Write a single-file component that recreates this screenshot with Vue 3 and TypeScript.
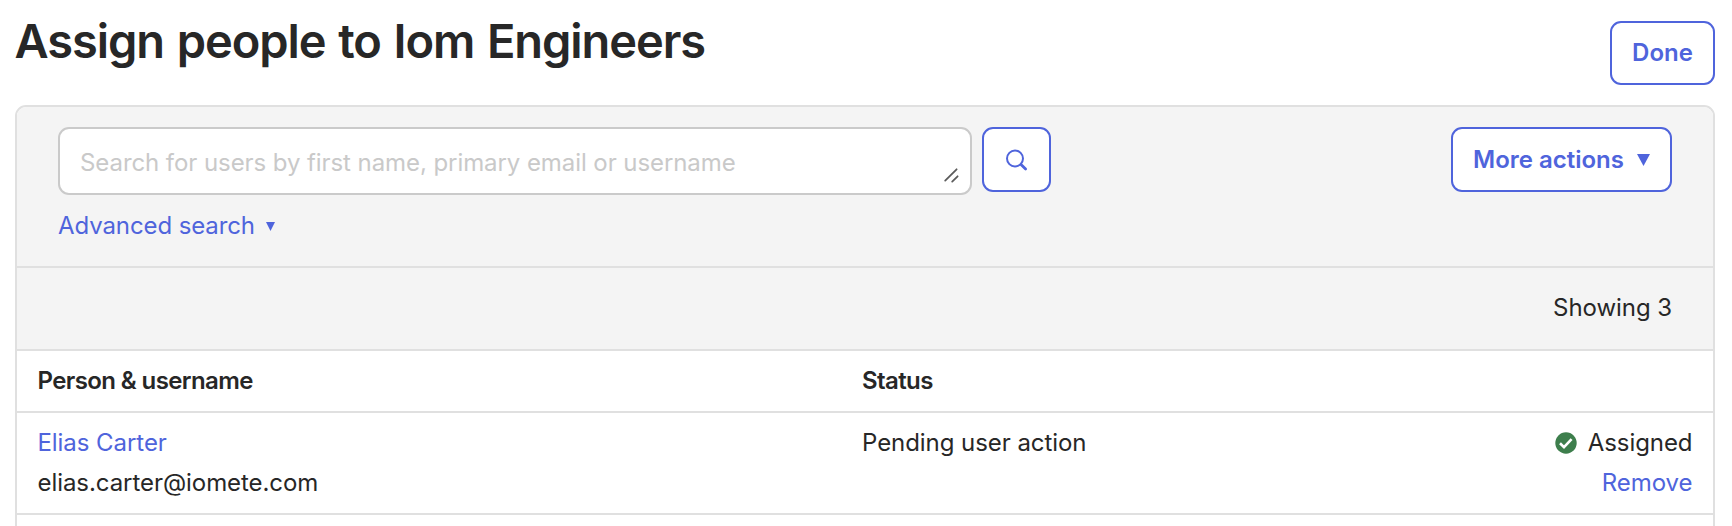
<script setup lang="ts">
import { ref } from 'vue'

interface Person {
  name: string
  email: string
  status: string
}

const query = ref('')
const people: Person[] = [
  { name: 'Elias Carter', email: 'elias.carter@iomete.com', status: 'Pending user action' },
]
</script>

<template>
  <main class="page">
    <header class="page-head">
      <h1 class="title">Assign people to Iom Engineers</h1>
      <button class="btn done" type="button">Done</button>
    </header>

    <section class="panel">
      <div class="filters">
        <div class="search-col">
          <div class="search-row">
            <label class="search-box">
              <input v-model="query" class="search-input" type="text" placeholder="Search for users by first name, primary email or username" />
              <svg class="grip" viewBox="0 0 16 16" width="16" height="16">
                <path d="M2.2 13.6 13.6 2.3M9.2 14.6 14.6 9.3" />
              </svg>
            </label>
            <button class="btn search-btn" type="button" aria-label="Search">
              <svg viewBox="0 0 22 22" width="22" height="22">
                <circle cx="9" cy="9.5" r="8" />
                <path d="M15 15.4 19.6 20" class="handle" />
              </svg>
            </button>
          </div>
          <a class="advanced">
            <span>Advanced search</span>
            <svg viewBox="0 0 9 9" width="9" height="9"><path d="M0 0H9L4.5 9Z" /></svg>
          </a>
        </div>
        <button class="btn more" type="button">
          <span>More actions</span>
          <svg viewBox="0 0 13 12" width="13" height="12"><path d="M0 0H13L6.5 12Z" /></svg>
        </button>
      </div>

      <div class="count">Showing 3</div>

      <div class="row head">
        <div class="cell">Person &amp; username</div>
        <div class="cell">Status</div>
        <div class="cell"></div>
      </div>
      <div v-for="p in people" :key="p.email" class="row">
        <div class="cell">
          <a class="link">{{ p.name }}</a>
          <span>{{ p.email }}</span>
        </div>
        <div class="cell">{{ p.status }}</div>
        <div class="cell end">
          <span class="assigned">
            <svg viewBox="0 0 22 22" width="22" height="22">
              <circle cx="11" cy="11" r="10.7" />
              <path d="M5 11.2 9 15.1 16.6 7.2" />
            </svg>
            <span>Assigned</span>
          </span>
          <a class="link">Remove</a>
        </div>
      </div>
    </section>
  </main>
</template>

<style>
html,
body {
  margin: 0;
  height: 526px;
  overflow: hidden;
  background: #fff;
}
</style>

<style scoped>
.page {
  box-sizing: border-box;
  height: 526px;
  padding: 21px 17px 0 15px;
  overflow: hidden;
  color: #272727;
  font: 24px/40px Inter, 'Liberation Sans', sans-serif;
  letter-spacing: -0.06px;
}
.page-head {
  display: flex;
  justify-content: space-between;
  align-items: flex-start;
  height: 84px;
}
.title {
  margin: -10px 0 0 -0.5px;
  font-size: 47px;
  line-height: 60px;
  font-weight: 600;
  letter-spacing: -1.08px;
  word-spacing: 2px;
  white-space: nowrap;
}
.btn {
  display: flex;
  align-items: center;
  justify-content: center;
  box-sizing: border-box;
  padding: 0;
  border: 2px solid #4f64dc;
  border-radius: 11px;
  background: #fff;
  color: #4f64dc;
  font: 600 24px/36px Inter, 'Liberation Sans', sans-serif;
  letter-spacing: 0;
}
.done {
  width: 105px;
  height: 64px;
}
.panel {
  height: 500px;
  border: 2px solid #e0e0e0;
  border-radius: 11px;
}
.filters {
  display: flex;
  justify-content: space-between;
  align-items: flex-start;
  box-sizing: border-box;
  height: 161px;
  padding: 20px 41px 0;
  border-bottom: 2px solid #e0e0e0;
  border-radius: 9px 9px 0 0;
  background: #f4f4f4;
}
.search-row {
  display: flex;
  align-items: flex-start;
  gap: 10px;
}
.search-box {
  display: flex;
  align-items: flex-end;
  box-sizing: border-box;
  width: 914px;
  height: 68px;
  padding: 0 11px 10px 20px;
  border: 2px solid #cacaca;
  border-radius: 11px;
  background: #fff;
}
.search-input {
  flex: 1;
  height: 40px;
  padding: 0;
  border: 0;
  outline: 0;
  background: none;
  color: inherit;
  font: inherit;
  letter-spacing: -0.075px;
}
.search-input::placeholder {
  color: #c9c9c9;
  opacity: 1;
}
.grip {
  fill: none;
  stroke: #5c5c5c;
  stroke-width: 1.8;
  stroke-linecap: round;
}
.search-btn {
  width: 69px;
  height: 65px;
}
.search-btn svg {
  fill: none;
  stroke: #4f64dc;
  stroke-width: 2;
}
.search-btn .handle {
  stroke-width: 2.8;
  stroke-linecap: round;
}
.advanced {
  display: flex;
  align-items: center;
  gap: 11px;
  margin-top: 11px;
  color: #4f64dc;
  letter-spacing: -0.1px;
}
.advanced svg,
.more svg {
  fill: #4f64dc;
}
.more {
  gap: 13px;
  width: 221px;
  height: 65px;
}
.count {
  box-sizing: border-box;
  height: 83px;
  padding: 20px 41px 0;
  border-bottom: 2px solid #e0e0e0;
  background: #f4f4f4;
  text-align: right;
}
.row {
  display: grid;
  grid-template-columns: 824.5px 522px 1fr;
  box-sizing: border-box;
  height: 102px;
  padding: 10px 20.5px 0;
  border-bottom: 2px solid #e0e0e0;
}
.row.head {
  height: 62px;
  font-weight: 600;
  letter-spacing: -0.6px;
}
.cell {
  display: flex;
  flex-direction: column;
  align-items: flex-start;
}
.cell.end {
  align-items: flex-end;
}
.link {
  color: #4f64dc;
}
.assigned {
  display: flex;
  align-items: center;
  gap: 11px;
}
.assigned circle {
  fill: #3d7e4c;
}
.assigned path {
  fill: none;
  stroke: #fff;
  stroke-width: 2.6;
}
</style>
